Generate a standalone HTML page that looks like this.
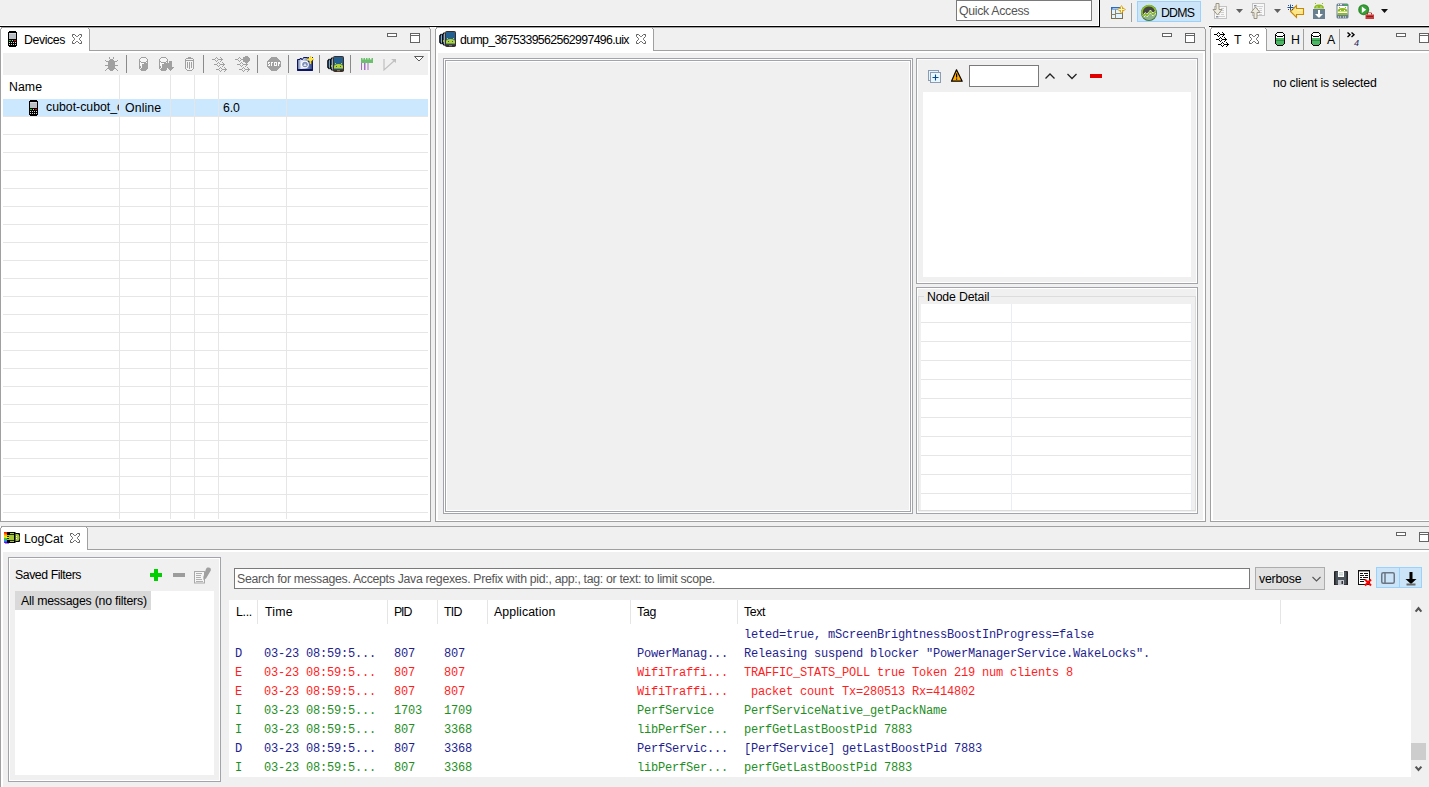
<!DOCTYPE html>
<html><head><meta charset="utf-8">
<style>
html,body{margin:0;padding:0}
body{width:1429px;height:787px;overflow:hidden;background:#f0f0f0;position:relative;font-family:"Liberation Sans",sans-serif;font-size:12px;color:#000}
.a{position:absolute}
.b{position:absolute;box-sizing:border-box}
.h{position:absolute;height:1px}
.v{position:absolute;width:1px}
.t{position:absolute;white-space:nowrap;line-height:14px;font-size:12px}
.m{position:absolute;white-space:pre;line-height:14px;font-family:"Liberation Mono",monospace;font-size:12px;letter-spacing:-0.2px;opacity:0.88}
svg{position:absolute;overflow:visible}
</style></head><body>

<div class="h" style="left:0px;top:25px;width:1099px;background:#fff"></div>
<div class="h" style="left:0px;top:26px;width:1100px;background:#000"></div>
<div class="v" style="left:1098px;top:0px;height:25px;background:#fff"></div>
<div class="v" style="left:1099px;top:0px;height:26px;background:#000"></div>
<div class="h" style="left:1209px;top:25px;width:220px;background:#fff"></div>
<div class="h" style="left:1209px;top:26px;width:220px;background:#000"></div>
<div class="b" style="left:956px;top:0px;width:136px;height:21px;border:1px solid #7a7a7a;background:#fff;"></div>
<div class="t" id="qa" style="left:959px;top:4px;color:#555;font-size:12.3px;letter-spacing:-0.301px;">Quick Access</div>
<!-- open perspective -->
<svg style="left:1111px;top:5px" width="15" height="14" viewBox="0 0 15 14"><rect x="0.5" y="2.5" width="11" height="11" fill="#e2f4ff" stroke="#7a6f4a" stroke-width="1"/><rect x="0" y="2" width="10" height="2.5" fill="#2e6bc0"/><rect x="1.5" y="3" width="7" height="1" fill="#9cc6f0"/><path d="M4.5 4.5V13.5M0.5 9.5H4.5M4.5 8.5H11.5" stroke="#8f8563" stroke-width="1"/><path d="M10.5 0L12.3 2.7L15 4.5L12.3 6.3L10.5 9L8.7 6.3L6 4.5L8.7 2.7Z" fill="#d9a520"/><path d="M10.5 1.5V7.5M7.5 4.5H13.5" stroke="#fff7c0" stroke-width="1"/></svg>
<div class="v" style="left:1131px;top:3px;height:19px;background:#a0a0a0"></div>
<!-- DDMS toggle -->
<div class="b" style="left:1137px;top:1px;width:64px;height:21px;border:1px solid #99d1ff;background:#cce4f7"></div>
<svg style="left:1141px;top:5px" width="16" height="16" viewBox="0 0 16 16"><defs><clipPath id="ddc"><circle cx="8" cy="8" r="7.2"/></clipPath></defs><circle cx="8" cy="8" r="8" fill="#3c6e2a"/><g clip-path="url(#ddc)"><rect x="0" y="0" width="16" height="16" fill="#90b48a"/><path d="M0 0H16V4.5L12 8L9.5 5L6 9L4.5 7.5L0 11.5Z" fill="#454545"/><path d="M0 11.5L4.5 7.5L6 9L9.5 5L12 8L16 4.5V7.5L12 11L9.5 8L6 12L4.5 10.5L0 14.5Z" fill="#86b82a"/><path d="M0 11.5L4.5 7.5L6 9L9.5 5L12 8L16 4.5" fill="none" stroke="#fff" stroke-width="1" stroke-dasharray="1.2 0.8"/><path d="M0 14.5L4.5 10.5L6 12L9.5 8L12 11L16 7.5" fill="none" stroke="#fff" stroke-width="1" stroke-dasharray="1.2 0.8"/></g><path d="M1.3 9.5A6.8 6.8 0 0 1 14.5 5.5" fill="none" stroke="#8cc21e" stroke-width="1.6"/></svg>
<!-- next annotation (disabled) -->
<svg style="left:1213px;top:3px" width="15" height="17" viewBox="0 0 15 17"><rect x="1.5" y="3.5" width="12" height="12" fill="#f8f8f8" stroke="#c3c3c3" stroke-width="1"/><g fill="#d0d0d0"><rect x="8" y="5" width="3" height="1"/><rect x="8" y="7" width="3" height="1"/><rect x="7" y="9" width="4" height="1"/><rect x="5" y="11" width="2" height="1"/><rect x="8" y="11" width="3" height="1"/><rect x="6" y="13" width="6" height="1"/></g><rect x="3" y="13" width="2.5" height="1.5" fill="#8a94a3"/><path d="M2.5 0.5H5.5V6.5H8.5L4 12L-0.5 6.5H2.5Z" transform="translate(0.5 0)" fill="#eeebe0" stroke="#9c9583" stroke-width="1"/></svg>
<svg style="left:1236px;top:9px" width="8" height="5" viewBox="0 0 8 5"><path d="M0 0H7L3.5 4Z" fill="#606060"/></svg>
<!-- prev annotation (disabled) -->
<svg style="left:1251px;top:3px" width="15" height="17" viewBox="0 0 15 17"><rect x="1.5" y="0.5" width="12" height="12" fill="#f8f8f8" stroke="#c3c3c3" stroke-width="1"/><g fill="#d0d0d0"><rect x="6" y="3" width="6" height="1"/><rect x="5" y="5" width="2" height="1"/><rect x="8" y="5" width="3" height="1"/><rect x="7" y="7" width="4" height="1"/><rect x="8" y="9" width="3" height="1"/><rect x="8" y="11" width="3" height="1"/></g><rect x="3" y="2" width="2.5" height="1.5" fill="#8a94a3"/><path d="M2.5 15.5H5.5V9.5H8.5L4 4L-0.5 9.5H2.5Z" transform="translate(0.5 0)" fill="#eeebe0" stroke="#9c9583" stroke-width="1"/></svg>
<svg style="left:1274px;top:9px" width="8" height="5" viewBox="0 0 8 5"><path d="M0 0H7L3.5 4Z" fill="#606060"/></svg>
<!-- back -->
<svg style="left:1287px;top:4px" width="18" height="14" viewBox="0 0 18 14"><path d="M3.5 7.5L9.5 1.5V4.5H16.5V10.5H9.5V13.5Z" fill="#fde58a" stroke="#c98a00" stroke-width="1.1"/><path d="M10 6H16" stroke="#fff8d0" stroke-width="1"/><g stroke="#1f4f8f" stroke-width="1"><path d="M3.5 0.5V6.5M0.5 3.5H6.5"/></g><g fill="#1f4f8f"><rect x="1" y="1" width="1" height="1"/><rect x="5" y="1" width="1" height="1"/><rect x="1" y="5" width="1" height="1"/><rect x="5" y="5" width="1" height="1"/></g></svg>
<!-- sdk manager -->
<svg style="left:1313px;top:3px" width="13" height="16" viewBox="0 0 13 16"><path d="M1 5.5Q1 1.5 6 1.5Q11 1.5 11 5.5Z" fill="#8dbb1a"/><rect x="2" y="0" width="1" height="1" fill="#8dbb1a"/><rect x="9" y="0" width="1" height="1" fill="#8dbb1a"/><rect x="3.5" y="3.5" width="1" height="1" fill="#fff"/><rect x="7.5" y="3.5" width="1" height="1" fill="#fff"/><rect x="0" y="6" width="12" height="10" fill="#687f90"/><path d="M5 7H7V11H10L6 15L2 11H5Z" fill="#fff"/></svg>
<!-- avd manager -->
<svg style="left:1336px;top:3px" width="13" height="16" viewBox="0 0 13 16"><rect x="0.5" y="0.5" width="12" height="15" rx="1.5" fill="#687f90"/><rect x="1.5" y="3" width="10" height="8.5" fill="#fff"/><path d="M1.5 8.5Q1.5 5 6.5 5Q11.5 5 11.5 8.5Z" fill="#8dbb1a"/><rect x="1.5" y="10" width="10" height="1.8" fill="#8dbb1a"/><rect x="3" y="4" width="1" height="1" fill="#8dbb1a"/><rect x="9" y="4" width="1" height="1" fill="#8dbb1a"/><rect x="4" y="7" width="1" height="1" fill="#fff"/><rect x="8" y="7" width="1" height="1" fill="#fff"/><g fill="#fff"><rect x="2" y="1.2" width="1" height="1"/><rect x="4" y="1.2" width="2" height="1"/><rect x="2" y="13.5" width="1" height="1"/><rect x="4" y="13.5" width="1" height="1"/><rect x="7" y="13.5" width="1" height="1"/><rect x="9" y="13.5" width="1" height="1"/></g><rect x="8.5" y="1.2" width="1.2" height="1.2" fill="#22dd22"/><rect x="10.3" y="1.2" width="1.2" height="1.2" fill="#22dd22"/></svg>
<!-- external tools -->
<svg style="left:1358px;top:4px" width="17" height="16" viewBox="0 0 17 16"><circle cx="5.7" cy="5.7" r="5.5" fill="#2e8b2e"/><circle cx="5.7" cy="5.7" r="4.2" fill="#37a137"/><path d="M3.8 2.5V9L8.2 5.7Z" fill="#fff"/><path d="M7.5 10.5H16V15H7.5Z" fill="#cc3b3b"/><path d="M9.5 10.5V9H13.5V10.5" fill="none" stroke="#b02828" stroke-width="1"/><rect x="10" y="9.3" width="3" height="0.8" fill="#fff"/><rect x="8.5" y="12" width="6.5" height="0.9" fill="#8a1a1a"/></svg>
<svg style="left:1381px;top:9px" width="8" height="5" viewBox="0 0 8 5"><path d="M0 0H7L3.5 4Z" fill="#111"/></svg>

<div class="t" id="ddms" style="left:1161px;top:6px;color:#000;font-size:12.3px;letter-spacing:-0.773px;">DDMS</div>
<div class="b" style="left:0px;top:27px;width:431px;height:495px;border:1px solid #a0a0a0;background:#fff;"></div>
<div class="b" style="left:435px;top:27px;width:771px;height:495px;border:1px solid #a0a0a0;background:#fff;"></div>
<div class="b" style="left:1210px;top:27px;width:240px;height:495px;border:1px solid #a0a0a0;background:#fff;"></div>
<div class="b" style="left:0px;top:526px;width:1450px;height:280px;border:1px solid #a0a0a0;background:#fff;"></div>
<div class="a" style="left:1px;top:28px;width:429px;height:22px;background:#f0f0f0"></div>
<div class="h" style="left:1px;top:50px;width:429px;background:#a0a0a0"></div>
<div class="a" style="left:1px;top:28px;width:88px;height:23px;background:#fff"></div>
<div class="v" style="left:89px;top:29px;height:22px;background:#a0a0a0"></div>
<div class="a" style="left:88px;top:28px;width:1px;height:1px;background:#a0a0a0"></div>
<div class="a" style="left:436px;top:28px;width:769px;height:22px;background:#f0f0f0"></div>
<div class="h" style="left:436px;top:50px;width:769px;background:#a0a0a0"></div>
<div class="a" style="left:436px;top:28px;width:217px;height:23px;background:#fff"></div>
<div class="v" style="left:653px;top:29px;height:22px;background:#a0a0a0"></div>
<div class="a" style="left:652px;top:28px;width:1px;height:1px;background:#a0a0a0"></div>
<div class="a" style="left:1211px;top:28px;width:218px;height:22px;background:#f0f0f0"></div>
<div class="h" style="left:1211px;top:50px;width:218px;background:#a0a0a0"></div>
<div class="a" style="left:1211px;top:28px;width:55px;height:23px;background:#fff"></div>
<div class="v" style="left:1266px;top:29px;height:22px;background:#a0a0a0"></div>
<div class="a" style="left:1265px;top:28px;width:1px;height:1px;background:#a0a0a0"></div>
<div class="v" style="left:1303px;top:29px;height:21px;background:#a0a0a0"></div>
<div class="v" style="left:1339px;top:29px;height:21px;background:#a0a0a0"></div>
<div class="a" style="left:1px;top:527px;width:1428px;height:22px;background:#f0f0f0"></div>
<div class="h" style="left:1px;top:549px;width:1428px;background:#a0a0a0"></div>
<div class="a" style="left:1px;top:527px;width:86px;height:23px;background:#fff"></div>
<div class="v" style="left:87px;top:528px;height:22px;background:#a0a0a0"></div>
<div class="a" style="left:86px;top:527px;width:1px;height:1px;background:#a0a0a0"></div>
<div class="a" style="left:0px;top:27px;width:1px;height:2px;background:#f0f0f0"></div>
<div class="a" style="left:0px;top:27px;width:1px;height:1px;background:#fff"></div>
<div class="a" style="left:1px;top:28px;width:1px;height:1px;background:#a0a0a0"></div>
<div class="a" style="left:430px;top:27px;width:1px;height:2px;background:#f0f0f0"></div>
<div class="a" style="left:430px;top:27px;width:1px;height:1px;background:#fff"></div>
<div class="a" style="left:429px;top:28px;width:1px;height:1px;background:#a0a0a0"></div>
<div class="a" style="left:435px;top:27px;width:1px;height:2px;background:#f0f0f0"></div>
<div class="a" style="left:435px;top:27px;width:1px;height:1px;background:#fff"></div>
<div class="a" style="left:436px;top:28px;width:1px;height:1px;background:#a0a0a0"></div>
<div class="a" style="left:1205px;top:27px;width:1px;height:2px;background:#f0f0f0"></div>
<div class="a" style="left:1205px;top:27px;width:1px;height:1px;background:#fff"></div>
<div class="a" style="left:1204px;top:28px;width:1px;height:1px;background:#a0a0a0"></div>
<div class="a" style="left:1210px;top:27px;width:1px;height:2px;background:#f0f0f0"></div>
<div class="a" style="left:1210px;top:27px;width:1px;height:1px;background:#fff"></div>
<div class="a" style="left:1211px;top:28px;width:1px;height:1px;background:#a0a0a0"></div>
<div class="a" style="left:0px;top:526px;width:1px;height:2px;background:#f0f0f0"></div>
<div class="a" style="left:0px;top:526px;width:1px;height:1px;background:#fff"></div>
<div class="a" style="left:1px;top:527px;width:1px;height:1px;background:#a0a0a0"></div>
<div class="b" style="left:387px;top:33px;width:10px;height:4px;border:1px solid #646464;background:#fff"></div>
<div class="b" style="left:410px;top:33px;width:10px;height:10px;border:1px solid #646464;background:#fff"></div>
<div class="h" style="left:410px;top:35px;width:10px;background:#646464"></div>
<div class="b" style="left:1162px;top:33px;width:10px;height:4px;border:1px solid #646464;background:#fff"></div>
<div class="b" style="left:1185px;top:33px;width:10px;height:10px;border:1px solid #646464;background:#fff"></div>
<div class="h" style="left:1185px;top:35px;width:10px;background:#646464"></div>
<div class="b" style="left:1396px;top:33px;width:10px;height:4px;border:1px solid #646464;background:#fff"></div>
<div class="b" style="left:1419px;top:33px;width:10px;height:10px;border:1px solid #646464;background:#fff"></div>
<div class="h" style="left:1419px;top:35px;width:10px;background:#646464"></div>
<div class="b" style="left:1396px;top:532px;width:10px;height:4px;border:1px solid #646464;background:#fff"></div>
<div class="b" style="left:1419px;top:532px;width:10px;height:10px;border:1px solid #646464;background:#fff"></div>
<div class="h" style="left:1419px;top:534px;width:10px;background:#646464"></div>
<div class="t" id="devtab" style="left:24px;top:33px;color:#000;font-size:12.3px;letter-spacing:-0.375px;">Devices</div>
<svg style="left:72px;top:34px" width="10" height="10" viewBox="0 0 10 10"><path d="M0.5 0.5H2.5L4.5 2.5H5.5L7.5 0.5H9.5V2.5L7.5 4.5V5.5L9.5 7.5V9.5H7.5L5.5 7.5H4.5L2.5 9.5H0.5V7.5L2.5 5.5V4.5L0.5 2.5Z" fill="#fff" stroke="#5f5f5f" stroke-width="1"/></svg>
<div class="t" id="dumptab" style="left:460px;top:33px;color:#000;font-size:12.3px;letter-spacing:-0.637px;">dump_3675339562562997496.uix</div>
<svg style="left:636px;top:34px" width="10" height="10" viewBox="0 0 10 10"><path d="M0.5 0.5H2.5L4.5 2.5H5.5L7.5 0.5H9.5V2.5L7.5 4.5V5.5L9.5 7.5V9.5H7.5L5.5 7.5H4.5L2.5 9.5H0.5V7.5L2.5 5.5V4.5L0.5 2.5Z" fill="#fff" stroke="#5f5f5f" stroke-width="1"/></svg>
<div class="t" id="ttab" style="left:1234px;top:33px;color:#000;font-size:12.3px;">T</div>
<svg style="left:1249px;top:34px" width="10" height="10" viewBox="0 0 10 10"><path d="M0.5 0.5H2.5L4.5 2.5H5.5L7.5 0.5H9.5V2.5L7.5 4.5V5.5L9.5 7.5V9.5H7.5L5.5 7.5H4.5L2.5 9.5H0.5V7.5L2.5 5.5V4.5L0.5 2.5Z" fill="#fff" stroke="#5f5f5f" stroke-width="1"/></svg>
<div class="t" id="htab" style="left:1291px;top:33px;color:#000;font-size:12.3px;">H</div>
<div class="t" id="atab" style="left:1327px;top:33px;color:#000;font-size:12.3px;">A</div>
<div class="t" id="lctab" style="left:24px;top:532px;color:#000;font-size:12.3px;letter-spacing:-0.111px;">LogCat</div>
<svg style="left:70px;top:533px" width="10" height="10" viewBox="0 0 10 10"><path d="M0.5 0.5H2.5L4.5 2.5H5.5L7.5 0.5H9.5V2.5L7.5 4.5V5.5L9.5 7.5V9.5H7.5L5.5 7.5H4.5L2.5 9.5H0.5V7.5L2.5 5.5V4.5L0.5 2.5Z" fill="#fff" stroke="#5f5f5f" stroke-width="1"/></svg>
<!-- phone devices tab -->
<svg style="left:8px;top:31px" width="9" height="16" viewBox="0 0 9 16"><path d="M1 0H8V1H9V15H8V16H1V15H0V1H1Z" fill="#000"/><rect x="1" y="2" width="7" height="6" fill="#b9bec4"/><rect x="1" y="2" width="7" height="1" fill="#d4d8dc"/><rect x="1" y="9" width="2" height="1" fill="#00e000"/><rect x="4" y="9" width="1" height="1" fill="#c8c8c8"/><rect x="6" y="9" width="2" height="1" fill="#f00000"/><g fill="#d8d8d8"><rect x="1" y="11" width="1" height="1"/><rect x="3" y="11" width="1" height="1"/><rect x="5" y="11" width="1" height="1"/><rect x="7" y="11" width="1" height="1"/><rect x="1" y="13" width="1" height="1"/><rect x="3" y="13" width="1" height="1"/><rect x="5" y="13" width="1" height="1"/><rect x="7" y="13" width="1" height="1"/></g></svg>
<!-- dump tab devices icon -->
<svg style="left:439px;top:31px" width="17" height="16" viewBox="0 0 17 16"><path d="M2.5 3L0.8 4.8V11.2L2.5 13" fill="#1f4f78" stroke="#000" stroke-width="1.1"/><path d="M5.5 1.5L3.6 3.4V12.6L5.5 14.5" fill="#2a6090" stroke="#000" stroke-width="1.1"/><rect x="4" y="9" width="1.2" height="2" fill="#9fbf30"/><rect x="6" y="0" width="11" height="16" rx="1.8" fill="#3b2e27"/><rect x="7" y="1" width="9" height="12.5" fill="#23608f"/><path d="M7 12.5V10.5Q7 8 11.5 8Q16 8 16 10.5V12.5Z" fill="#b4d335"/><rect x="8" y="7" width="1" height="1" fill="#b4d335"/><rect x="14" y="7" width="1" height="1" fill="#b4d335"/><rect x="9" y="10" width="1" height="1" fill="#23608f"/><rect x="13" y="10" width="1" height="1" fill="#23608f"/><rect x="10" y="14.3" width="3" height="0.9" fill="#a08c70"/></svg>
<!-- chevrons 4 -->
<svg style="left:1347px;top:32px" width="9" height="6" viewBox="0 0 9 6"><path d="M0.5 0.5L3 2.8L0.5 5M4.5 0.5L7 2.8L4.5 5" fill="none" stroke="#000" stroke-width="1.4"/></svg>
<div class="t" style="left:1354px;top:36px;font-size:9px;color:#1a1a5a;font-style:italic">4</div>
<!-- logcat icon -->
<svg style="left:2px;top:529px" width="20" height="18" viewBox="0 0 20 18"><defs><linearGradient id="rb" x1="0" y1="0" x2="0" y2="1"><stop offset="0" stop-color="#f00"/><stop offset="0.25" stop-color="#f90"/><stop offset="0.45" stop-color="#fe0"/><stop offset="0.62" stop-color="#2c2"/><stop offset="0.8" stop-color="#29f"/><stop offset="1" stop-color="#70f"/></linearGradient></defs>
<rect x="2" y="3" width="3" height="11" fill="url(#rb)"/><path d="M2 3H3L4 4.5H7L8 3H10V5H5V4Z" fill="#f00"/><rect x="3" y="13" width="4" height="1.5" fill="#60f"/>
<rect x="5" y="3" width="8.5" height="11" fill="#000"/><rect x="13" y="4" width="5" height="9" rx="1" fill="#000"/>
<rect x="8" y="4" width="4" height="1.2" fill="#a4c639"/><rect x="8" y="11.8" width="4" height="1.2" fill="#a4c639"/>
<rect x="5" y="6" width="7" height="1.2" fill="#a4c639"/><rect x="5" y="9.8" width="7" height="1.2" fill="#a4c639"/><rect x="7" y="6" width="5" height="5" fill="#a4c639"/><rect x="4" y="8" width="3" height="1" fill="#fe0"/>
<path d="M13.5 5H15.5Q17.5 5 17.5 8.5Q17.5 12 15.5 12H13.5Z" fill="#a4c639"/><rect x="14" y="7" width="1" height="1" fill="#fff"/><rect x="14" y="9" width="1" height="1" fill="#fff"/></svg>

<svg style="left:1211px;top:29px" width="19" height="18" viewBox="0 0 19 18" shape-rendering="crispEdges"><rect x="7" y="3" width="1" height="1" fill="#000"/><rect x="11" y="3" width="1" height="1" fill="#000"/><rect x="6" y="4" width="1" height="1" fill="#000"/><rect x="8" y="4" width="1" height="1" fill="#000"/><rect x="12" y="4" width="1" height="1" fill="#000"/><rect x="3" y="5" width="3" height="1" fill="#000"/><rect x="9" y="5" width="5" height="1" fill="#000"/><rect x="6" y="6" width="1" height="1" fill="#000"/><rect x="8" y="6" width="1" height="1" fill="#000"/><rect x="12" y="6" width="1" height="1" fill="#000"/><rect x="7" y="7" width="1" height="1" fill="#000"/><rect x="11" y="7" width="1" height="1" fill="#000"/><rect x="9" y="8" width="1" height="1" fill="#000"/><rect x="13" y="8" width="1" height="1" fill="#000"/><rect x="8" y="9" width="1" height="1" fill="#000"/><rect x="10" y="9" width="1" height="1" fill="#000"/><rect x="14" y="9" width="1" height="1" fill="#000"/><rect x="5" y="10" width="3" height="1" fill="#000"/><rect x="11" y="10" width="5" height="1" fill="#000"/><rect x="8" y="11" width="1" height="1" fill="#000"/><rect x="10" y="11" width="1" height="1" fill="#000"/><rect x="14" y="11" width="1" height="1" fill="#000"/><rect x="9" y="12" width="1" height="1" fill="#000"/><rect x="13" y="12" width="1" height="1" fill="#000"/><rect x="11" y="13" width="1" height="1" fill="#000"/><rect x="15" y="13" width="1" height="1" fill="#000"/><rect x="10" y="14" width="1" height="1" fill="#000"/><rect x="12" y="14" width="1" height="1" fill="#000"/><rect x="16" y="14" width="1" height="1" fill="#000"/><rect x="7" y="15" width="3" height="1" fill="#000"/><rect x="13" y="15" width="5" height="1" fill="#000"/><rect x="10" y="16" width="1" height="1" fill="#000"/><rect x="12" y="16" width="1" height="1" fill="#000"/><rect x="16" y="16" width="1" height="1" fill="#000"/><rect x="11" y="17" width="1" height="1" fill="#000"/><rect x="15" y="17" width="1" height="1" fill="#000"/></svg>
<svg style="left:1275px;top:32px" width="10" height="14" viewBox="0 0 10 14" shape-rendering="crispEdges"><rect x="2" y="0" width="6" height="1" fill="#000"/><rect x="1" y="1" width="1" height="1" fill="#000"/><rect x="2" y="1" width="6" height="1" fill="#fff"/><rect x="8" y="1" width="1" height="1" fill="#000"/><rect x="0" y="2" width="1" height="1" fill="#000"/><rect x="1" y="2" width="8" height="1" fill="#fff"/><rect x="9" y="2" width="1" height="1" fill="#000"/><rect x="0" y="3" width="2" height="1" fill="#000"/><rect x="2" y="3" width="6" height="1" fill="#fff"/><rect x="8" y="3" width="2" height="1" fill="#000"/><rect x="0" y="4" width="1" height="1" fill="#000"/><rect x="1" y="4" width="1" height="1" fill="#fff"/><rect x="2" y="4" width="6" height="1" fill="#000"/><rect x="8" y="4" width="1" height="1" fill="#fff"/><rect x="9" y="4" width="1" height="1" fill="#000"/><rect x="0" y="5" width="1" height="1" fill="#000"/><rect x="1" y="5" width="8" height="1" fill="#fff"/><rect x="9" y="5" width="1" height="1" fill="#000"/><rect x="0" y="6" width="1" height="1" fill="#000"/><rect x="1" y="6" width="8" height="1" fill="#4cb563"/><rect x="9" y="6" width="1" height="1" fill="#000"/><rect x="0" y="7" width="1" height="1" fill="#000"/><rect x="1" y="7" width="8" height="1" fill="#4cb563"/><rect x="9" y="7" width="1" height="1" fill="#000"/><rect x="0" y="8" width="1" height="1" fill="#000"/><rect x="1" y="8" width="8" height="1" fill="#2f8a45"/><rect x="9" y="8" width="1" height="1" fill="#000"/><rect x="0" y="9" width="1" height="1" fill="#000"/><rect x="1" y="9" width="8" height="1" fill="#4cb563"/><rect x="9" y="9" width="1" height="1" fill="#000"/><rect x="0" y="10" width="1" height="1" fill="#000"/><rect x="1" y="10" width="8" height="1" fill="#4cb563"/><rect x="9" y="10" width="1" height="1" fill="#000"/><rect x="0" y="11" width="1" height="1" fill="#000"/><rect x="1" y="11" width="8" height="1" fill="#4cb563"/><rect x="9" y="11" width="1" height="1" fill="#000"/><rect x="1" y="12" width="1" height="1" fill="#000"/><rect x="2" y="12" width="6" height="1" fill="#4cb563"/><rect x="8" y="12" width="1" height="1" fill="#000"/><rect x="2" y="13" width="6" height="1" fill="#000"/></svg>
<svg style="left:1311px;top:32px" width="10" height="14" viewBox="0 0 10 14" shape-rendering="crispEdges"><rect x="2" y="0" width="6" height="1" fill="#000"/><rect x="1" y="1" width="1" height="1" fill="#000"/><rect x="2" y="1" width="6" height="1" fill="#fff"/><rect x="8" y="1" width="1" height="1" fill="#000"/><rect x="0" y="2" width="1" height="1" fill="#000"/><rect x="1" y="2" width="8" height="1" fill="#fff"/><rect x="9" y="2" width="1" height="1" fill="#000"/><rect x="0" y="3" width="2" height="1" fill="#000"/><rect x="2" y="3" width="6" height="1" fill="#fff"/><rect x="8" y="3" width="2" height="1" fill="#000"/><rect x="0" y="4" width="1" height="1" fill="#000"/><rect x="1" y="4" width="1" height="1" fill="#fff"/><rect x="2" y="4" width="6" height="1" fill="#000"/><rect x="8" y="4" width="1" height="1" fill="#fff"/><rect x="9" y="4" width="1" height="1" fill="#000"/><rect x="0" y="5" width="1" height="1" fill="#000"/><rect x="1" y="5" width="8" height="1" fill="#fff"/><rect x="9" y="5" width="1" height="1" fill="#000"/><rect x="0" y="6" width="1" height="1" fill="#000"/><rect x="1" y="6" width="8" height="1" fill="#4cb563"/><rect x="9" y="6" width="1" height="1" fill="#000"/><rect x="0" y="7" width="1" height="1" fill="#000"/><rect x="1" y="7" width="8" height="1" fill="#4cb563"/><rect x="9" y="7" width="1" height="1" fill="#000"/><rect x="0" y="8" width="1" height="1" fill="#000"/><rect x="1" y="8" width="8" height="1" fill="#2f8a45"/><rect x="9" y="8" width="1" height="1" fill="#000"/><rect x="0" y="9" width="1" height="1" fill="#000"/><rect x="1" y="9" width="8" height="1" fill="#4cb563"/><rect x="9" y="9" width="1" height="1" fill="#000"/><rect x="0" y="10" width="1" height="1" fill="#000"/><rect x="1" y="10" width="8" height="1" fill="#4cb563"/><rect x="9" y="10" width="1" height="1" fill="#000"/><rect x="0" y="11" width="1" height="1" fill="#000"/><rect x="1" y="11" width="8" height="1" fill="#4cb563"/><rect x="9" y="11" width="1" height="1" fill="#000"/><rect x="1" y="12" width="1" height="1" fill="#000"/><rect x="2" y="12" width="6" height="1" fill="#4cb563"/><rect x="8" y="12" width="1" height="1" fill="#000"/><rect x="2" y="13" width="6" height="1" fill="#000"/></svg>
<div class="a" style="left:3px;top:53px;width:425px;height:22px;background:#f0f0f0"></div>
<div class="a" style="left:3px;top:75px;width:425px;height:444px;background:#fff"></div>
<div class="v" style="left:126px;top:55px;height:18px;background:#8a8a8a"></div>
<div class="v" style="left:203px;top:55px;height:18px;background:#8a8a8a"></div>
<div class="v" style="left:257px;top:55px;height:18px;background:#8a8a8a"></div>
<div class="v" style="left:288px;top:55px;height:18px;background:#8a8a8a"></div>
<!-- camera -->
<svg style="left:297px;top:56px" width="17" height="16" viewBox="0 0 17 16"><defs><linearGradient id="camg" x1="0" y1="0" x2="1" y2="0"><stop offset="0" stop-color="#5a6fa0"/><stop offset="0.25" stop-color="#e8eef8"/><stop offset="0.6" stop-color="#8ea3c8"/><stop offset="1" stop-color="#2a3f80"/></linearGradient></defs><path d="M0.5 3.5H3V2.5H4.5V3.5H5.5L6.5 1.5H10.5L11.5 3.5H15.5V14.5H0.5Z" fill="url(#camg)" stroke="#0d1460" stroke-width="1"/><rect x="0.5" y="13" width="15" height="2" fill="#0d1460"/><circle cx="8" cy="8.5" r="3.8" fill="#fff"/><circle cx="8" cy="8.5" r="2.8" fill="#7d8fb8"/><path d="M6.3 10L8 7L9.7 10Z" fill="#dfe7f5"/><path d="M13.5 0V8M10 3.5H17" stroke="#ffd400" stroke-width="1.3"/><circle cx="13.5" cy="3.5" r="1.8" fill="#ffe640"/><g fill="#1a2a70"><rect x="11" y="1" width="1" height="1"/><rect x="15" y="1" width="1" height="1"/><rect x="11" y="5" width="1" height="1"/><rect x="15" y="5" width="1" height="1"/></g></svg>
<div class="v" style="left:319px;top:55px;height:18px;background:#8a8a8a"></div>
<!-- devices -->
<svg style="left:327px;top:56px" width="17" height="16" viewBox="0 0 17 16"><path d="M2.5 3L0.8 4.8V11.2L2.5 13" fill="#1f4f78" stroke="#000" stroke-width="1.1"/><path d="M5.5 1.5L3.6 3.4V12.6L5.5 14.5" fill="#2a6090" stroke="#000" stroke-width="1.1"/><rect x="4" y="9" width="1.2" height="2" fill="#9fbf30"/><rect x="6" y="0" width="11" height="16" rx="1.8" fill="#3b2e27"/><rect x="7" y="1" width="9" height="12.5" fill="#23608f"/><path d="M7 12.5V10.5Q7 8 11.5 8Q16 8 16 10.5V12.5Z" fill="#b4d335"/><rect x="8" y="7" width="1" height="1" fill="#b4d335"/><rect x="14" y="7" width="1" height="1" fill="#b4d335"/><rect x="9" y="10" width="1" height="1" fill="#23608f"/><rect x="13" y="10" width="1" height="1" fill="#23608f"/><rect x="10" y="14.3" width="3" height="0.9" fill="#a08c70"/></svg>
<div class="v" style="left:350px;top:55px;height:18px;background:#8a8a8a"></div>
<!-- tracks -->
<svg style="left:361px;top:58px" width="13" height="12" viewBox="0 0 13 12"><path d="M0 0H1.5V1.5H2.5V0H4V1.5H5V0H6.5V1.5H7.5V0H9V1.5H10.5V0H12V5H0Z" fill="#6cbf6c"/><g fill="#a56cc1"><rect x="0" y="5" width="1" height="7"/><rect x="3" y="5" width="1.5" height="7"/><rect x="6.5" y="5" width="1" height="7"/></g></svg>
<!-- arrow -->
<svg style="left:383px;top:58px" width="14" height="13" viewBox="0 0 14 13"><path d="M1 1V12L11 3" fill="none" stroke="#c0c0c0" stroke-width="1.2"/><path d="M8 1H13V5Z" fill="#c0c0c0"/></svg>
<!-- view menu -->
<svg style="left:414px;top:56px" width="11" height="7" viewBox="0 0 11 7"><path d="M0.5 0.5H9.5L5 5Z" fill="#fff" stroke="#5a5a5a" stroke-width="1"/></svg>

<svg style="left:139px;top:57px" width="9" height="14" viewBox="0 0 9 14" shape-rendering="crispEdges"><rect x="2" y="0" width="5" height="1" fill="#a0a0a0"/><rect x="1" y="1" width="1" height="1" fill="#a0a0a0"/><rect x="2" y="1" width="5" height="1" fill="#f6f6f6"/><rect x="7" y="1" width="1" height="1" fill="#a0a0a0"/><rect x="0" y="2" width="1" height="1" fill="#a0a0a0"/><rect x="1" y="2" width="7" height="1" fill="#f6f6f6"/><rect x="8" y="2" width="1" height="1" fill="#a0a0a0"/><rect x="0" y="3" width="1" height="1" fill="#a0a0a0"/><rect x="1" y="3" width="7" height="1" fill="#f6f6f6"/><rect x="8" y="3" width="1" height="1" fill="#a0a0a0"/><rect x="0" y="4" width="2" height="1" fill="#a0a0a0"/><rect x="2" y="4" width="5" height="1" fill="#f6f6f6"/><rect x="7" y="4" width="2" height="1" fill="#a0a0a0"/><rect x="0" y="5" width="1" height="1" fill="#a0a0a0"/><rect x="1" y="5" width="1" height="1" fill="#f6f6f6"/><rect x="2" y="5" width="5" height="1" fill="#a0a0a0"/><rect x="7" y="5" width="1" height="1" fill="#f6f6f6"/><rect x="8" y="5" width="1" height="1" fill="#a0a0a0"/><rect x="0" y="6" width="1" height="1" fill="#a0a0a0"/><rect x="1" y="6" width="4" height="1" fill="#f6f6f6"/><rect x="5" y="6" width="4" height="1" fill="#a0a0a0"/><rect x="0" y="7" width="1" height="1" fill="#a0a0a0"/><rect x="1" y="7" width="2" height="1" fill="#f6f6f6"/><rect x="3" y="7" width="6" height="1" fill="#a0a0a0"/><rect x="0" y="8" width="1" height="1" fill="#a0a0a0"/><rect x="1" y="8" width="2" height="1" fill="#f6f6f6"/><rect x="3" y="8" width="6" height="1" fill="#a0a0a0"/><rect x="0" y="9" width="2" height="1" fill="#a0a0a0"/><rect x="2" y="9" width="1" height="1" fill="#f6f6f6"/><rect x="3" y="9" width="6" height="1" fill="#a0a0a0"/><rect x="0" y="10" width="2" height="1" fill="#a0a0a0"/><rect x="2" y="10" width="1" height="1" fill="#f6f6f6"/><rect x="3" y="10" width="6" height="1" fill="#a0a0a0"/><rect x="0" y="11" width="1" height="1" fill="#a0a0a0"/><rect x="1" y="11" width="1" height="1" fill="#f6f6f6"/><rect x="2" y="11" width="7" height="1" fill="#a0a0a0"/><rect x="1" y="12" width="7" height="1" fill="#a0a0a0"/><rect x="2" y="13" width="5" height="1" fill="#a0a0a0"/></svg>
<svg style="left:159px;top:57px" width="16" height="14" viewBox="0 0 16 14" shape-rendering="crispEdges"><rect x="2" y="0" width="5" height="1" fill="#a0a0a0"/><rect x="1" y="1" width="1" height="1" fill="#a0a0a0"/><rect x="2" y="1" width="5" height="1" fill="#f6f6f6"/><rect x="7" y="1" width="1" height="1" fill="#a0a0a0"/><rect x="0" y="2" width="1" height="1" fill="#a0a0a0"/><rect x="1" y="2" width="7" height="1" fill="#f6f6f6"/><rect x="8" y="2" width="1" height="1" fill="#a0a0a0"/><rect x="0" y="3" width="1" height="1" fill="#a0a0a0"/><rect x="1" y="3" width="7" height="1" fill="#f6f6f6"/><rect x="8" y="3" width="1" height="1" fill="#a0a0a0"/><rect x="0" y="4" width="2" height="1" fill="#a0a0a0"/><rect x="2" y="4" width="5" height="1" fill="#f6f6f6"/><rect x="7" y="4" width="2" height="1" fill="#a0a0a0"/><rect x="10" y="4" width="3" height="1" fill="#a0a0a0"/><rect x="0" y="5" width="1" height="1" fill="#a0a0a0"/><rect x="1" y="5" width="1" height="1" fill="#f6f6f6"/><rect x="2" y="5" width="5" height="1" fill="#a0a0a0"/><rect x="7" y="5" width="1" height="1" fill="#f6f6f6"/><rect x="8" y="5" width="1" height="1" fill="#a0a0a0"/><rect x="10" y="5" width="3" height="1" fill="#a0a0a0"/><rect x="0" y="6" width="1" height="1" fill="#a0a0a0"/><rect x="1" y="6" width="4" height="1" fill="#f6f6f6"/><rect x="5" y="6" width="8" height="1" fill="#a0a0a0"/><rect x="0" y="7" width="1" height="1" fill="#a0a0a0"/><rect x="1" y="7" width="2" height="1" fill="#f6f6f6"/><rect x="3" y="7" width="10" height="1" fill="#a0a0a0"/><rect x="0" y="8" width="1" height="1" fill="#a0a0a0"/><rect x="1" y="8" width="2" height="1" fill="#f6f6f6"/><rect x="3" y="8" width="10" height="1" fill="#a0a0a0"/><rect x="0" y="9" width="2" height="1" fill="#a0a0a0"/><rect x="2" y="9" width="1" height="1" fill="#f6f6f6"/><rect x="3" y="9" width="10" height="1" fill="#a0a0a0"/><rect x="0" y="10" width="2" height="1" fill="#a0a0a0"/><rect x="2" y="10" width="1" height="1" fill="#f6f6f6"/><rect x="3" y="10" width="12" height="1" fill="#a0a0a0"/><rect x="0" y="11" width="1" height="1" fill="#a0a0a0"/><rect x="1" y="11" width="1" height="1" fill="#f6f6f6"/><rect x="2" y="11" width="6" height="1" fill="#a0a0a0"/><rect x="8" y="11" width="1" height="1" fill="#f6f6f6"/><rect x="9" y="11" width="5" height="1" fill="#a0a0a0"/><rect x="1" y="12" width="7" height="1" fill="#a0a0a0"/><rect x="10" y="12" width="3" height="1" fill="#a0a0a0"/><rect x="2" y="13" width="5" height="1" fill="#a0a0a0"/><rect x="11" y="13" width="1" height="1" fill="#a0a0a0"/></svg>
<svg style="left:185px;top:57px" width="9" height="14" viewBox="0 0 9 14" shape-rendering="crispEdges"><rect x="3" y="0" width="3" height="1" fill="#a0a0a0"/><rect x="1" y="1" width="7" height="1" fill="#a0a0a0"/><rect x="0" y="2" width="1" height="1" fill="#a0a0a0"/><rect x="1" y="2" width="7" height="1" fill="#f4f4f4"/><rect x="8" y="2" width="1" height="1" fill="#a0a0a0"/><rect x="0" y="3" width="9" height="1" fill="#a0a0a0"/><rect x="0" y="4" width="1" height="1" fill="#a0a0a0"/><rect x="1" y="4" width="7" height="1" fill="#f4f4f4"/><rect x="8" y="4" width="1" height="1" fill="#a0a0a0"/><rect x="0" y="5" width="1" height="1" fill="#a0a0a0"/><rect x="1" y="5" width="1" height="1" fill="#f4f4f4"/><rect x="2" y="5" width="1" height="1" fill="#a0a0a0"/><rect x="3" y="5" width="1" height="1" fill="#f4f4f4"/><rect x="4" y="5" width="1" height="1" fill="#a0a0a0"/><rect x="5" y="5" width="1" height="1" fill="#f4f4f4"/><rect x="6" y="5" width="1" height="1" fill="#a0a0a0"/><rect x="7" y="5" width="1" height="1" fill="#f4f4f4"/><rect x="8" y="5" width="1" height="1" fill="#a0a0a0"/><rect x="0" y="6" width="1" height="1" fill="#a0a0a0"/><rect x="1" y="6" width="1" height="1" fill="#f4f4f4"/><rect x="2" y="6" width="1" height="1" fill="#a0a0a0"/><rect x="3" y="6" width="1" height="1" fill="#f4f4f4"/><rect x="4" y="6" width="1" height="1" fill="#a0a0a0"/><rect x="5" y="6" width="1" height="1" fill="#f4f4f4"/><rect x="6" y="6" width="1" height="1" fill="#a0a0a0"/><rect x="7" y="6" width="1" height="1" fill="#f4f4f4"/><rect x="8" y="6" width="1" height="1" fill="#a0a0a0"/><rect x="0" y="7" width="1" height="1" fill="#a0a0a0"/><rect x="1" y="7" width="1" height="1" fill="#f4f4f4"/><rect x="2" y="7" width="1" height="1" fill="#a0a0a0"/><rect x="3" y="7" width="1" height="1" fill="#f4f4f4"/><rect x="4" y="7" width="1" height="1" fill="#a0a0a0"/><rect x="5" y="7" width="1" height="1" fill="#f4f4f4"/><rect x="6" y="7" width="1" height="1" fill="#a0a0a0"/><rect x="7" y="7" width="1" height="1" fill="#f4f4f4"/><rect x="8" y="7" width="1" height="1" fill="#a0a0a0"/><rect x="0" y="8" width="1" height="1" fill="#a0a0a0"/><rect x="1" y="8" width="1" height="1" fill="#f4f4f4"/><rect x="2" y="8" width="1" height="1" fill="#a0a0a0"/><rect x="3" y="8" width="1" height="1" fill="#f4f4f4"/><rect x="4" y="8" width="1" height="1" fill="#a0a0a0"/><rect x="5" y="8" width="1" height="1" fill="#f4f4f4"/><rect x="6" y="8" width="1" height="1" fill="#a0a0a0"/><rect x="7" y="8" width="1" height="1" fill="#f4f4f4"/><rect x="8" y="8" width="1" height="1" fill="#a0a0a0"/><rect x="0" y="9" width="1" height="1" fill="#a0a0a0"/><rect x="1" y="9" width="1" height="1" fill="#f4f4f4"/><rect x="2" y="9" width="1" height="1" fill="#a0a0a0"/><rect x="3" y="9" width="1" height="1" fill="#f4f4f4"/><rect x="4" y="9" width="1" height="1" fill="#a0a0a0"/><rect x="5" y="9" width="1" height="1" fill="#f4f4f4"/><rect x="6" y="9" width="1" height="1" fill="#a0a0a0"/><rect x="7" y="9" width="1" height="1" fill="#f4f4f4"/><rect x="8" y="9" width="1" height="1" fill="#a0a0a0"/><rect x="0" y="10" width="1" height="1" fill="#a0a0a0"/><rect x="1" y="10" width="1" height="1" fill="#f4f4f4"/><rect x="2" y="10" width="1" height="1" fill="#a0a0a0"/><rect x="3" y="10" width="1" height="1" fill="#f4f4f4"/><rect x="4" y="10" width="1" height="1" fill="#a0a0a0"/><rect x="5" y="10" width="1" height="1" fill="#f4f4f4"/><rect x="6" y="10" width="1" height="1" fill="#a0a0a0"/><rect x="7" y="10" width="1" height="1" fill="#f4f4f4"/><rect x="8" y="10" width="1" height="1" fill="#a0a0a0"/><rect x="0" y="11" width="1" height="1" fill="#a0a0a0"/><rect x="1" y="11" width="3" height="1" fill="#f4f4f4"/><rect x="4" y="11" width="1" height="1" fill="#a0a0a0"/><rect x="5" y="11" width="3" height="1" fill="#f4f4f4"/><rect x="8" y="11" width="1" height="1" fill="#a0a0a0"/><rect x="1" y="12" width="1" height="1" fill="#a0a0a0"/><rect x="2" y="12" width="5" height="1" fill="#f4f4f4"/><rect x="7" y="12" width="1" height="1" fill="#a0a0a0"/><rect x="2" y="13" width="5" height="1" fill="#a0a0a0"/></svg>
<svg style="left:104px;top:57px" width="15" height="14" viewBox="0 0 15 14" shape-rendering="crispEdges"><rect x="5" y="0" width="1" height="1" fill="#a0a0a0"/><rect x="9" y="0" width="1" height="1" fill="#a0a0a0"/><rect x="5" y="1" width="1" height="1" fill="#a0a0a0"/><rect x="9" y="1" width="1" height="1" fill="#a0a0a0"/><rect x="6" y="2" width="3" height="1" fill="#a0a0a0"/><rect x="1" y="3" width="1" height="1" fill="#a0a0a0"/><rect x="5" y="3" width="5" height="1" fill="#a0a0a0"/><rect x="13" y="3" width="1" height="1" fill="#a0a0a0"/><rect x="2" y="4" width="11" height="1" fill="#a0a0a0"/><rect x="4" y="5" width="7" height="1" fill="#a0a0a0"/><rect x="4" y="6" width="7" height="1" fill="#a0a0a0"/><rect x="4" y="7" width="7" height="1" fill="#a0a0a0"/><rect x="1" y="8" width="13" height="1" fill="#a0a0a0"/><rect x="4" y="9" width="7" height="1" fill="#a0a0a0"/><rect x="4" y="10" width="7" height="1" fill="#a0a0a0"/><rect x="3" y="11" width="9" height="1" fill="#a0a0a0"/><rect x="2" y="12" width="1" height="1" fill="#a0a0a0"/><rect x="5" y="12" width="5" height="1" fill="#a0a0a0"/><rect x="12" y="12" width="1" height="1" fill="#a0a0a0"/><rect x="1" y="13" width="1" height="1" fill="#a0a0a0"/><rect x="6" y="13" width="3" height="1" fill="#a0a0a0"/><rect x="13" y="13" width="1" height="1" fill="#a0a0a0"/></svg>
<svg style="left:210px;top:55px" width="17" height="17" viewBox="0 0 17 17" shape-rendering="crispEdges"><rect x="6" y="2" width="1" height="1" fill="#a0a0a0"/><rect x="10" y="2" width="1" height="1" fill="#a0a0a0"/><rect x="5" y="3" width="1" height="1" fill="#a0a0a0"/><rect x="7" y="3" width="1" height="1" fill="#a0a0a0"/><rect x="11" y="3" width="1" height="1" fill="#a0a0a0"/><rect x="2" y="4" width="3" height="1" fill="#a0a0a0"/><rect x="8" y="4" width="5" height="1" fill="#a0a0a0"/><rect x="5" y="5" width="1" height="1" fill="#a0a0a0"/><rect x="7" y="5" width="1" height="1" fill="#a0a0a0"/><rect x="11" y="5" width="1" height="1" fill="#a0a0a0"/><rect x="6" y="6" width="1" height="1" fill="#a0a0a0"/><rect x="10" y="6" width="1" height="1" fill="#a0a0a0"/><rect x="8" y="7" width="1" height="1" fill="#a0a0a0"/><rect x="12" y="7" width="1" height="1" fill="#a0a0a0"/><rect x="7" y="8" width="1" height="1" fill="#a0a0a0"/><rect x="9" y="8" width="1" height="1" fill="#a0a0a0"/><rect x="13" y="8" width="1" height="1" fill="#a0a0a0"/><rect x="4" y="9" width="3" height="1" fill="#a0a0a0"/><rect x="10" y="9" width="5" height="1" fill="#a0a0a0"/><rect x="7" y="10" width="1" height="1" fill="#a0a0a0"/><rect x="9" y="10" width="1" height="1" fill="#a0a0a0"/><rect x="13" y="10" width="1" height="1" fill="#a0a0a0"/><rect x="8" y="11" width="1" height="1" fill="#a0a0a0"/><rect x="12" y="11" width="1" height="1" fill="#a0a0a0"/><rect x="10" y="12" width="1" height="1" fill="#a0a0a0"/><rect x="14" y="12" width="1" height="1" fill="#a0a0a0"/><rect x="9" y="13" width="1" height="1" fill="#a0a0a0"/><rect x="11" y="13" width="1" height="1" fill="#a0a0a0"/><rect x="15" y="13" width="1" height="1" fill="#a0a0a0"/><rect x="6" y="14" width="3" height="1" fill="#a0a0a0"/><rect x="12" y="14" width="5" height="1" fill="#a0a0a0"/><rect x="9" y="15" width="1" height="1" fill="#a0a0a0"/><rect x="11" y="15" width="1" height="1" fill="#a0a0a0"/><rect x="15" y="15" width="1" height="1" fill="#a0a0a0"/><rect x="10" y="16" width="1" height="1" fill="#a0a0a0"/><rect x="14" y="16" width="1" height="1" fill="#a0a0a0"/></svg>
<svg style="left:233px;top:53px" width="18" height="19" viewBox="0 0 18 19" shape-rendering="crispEdges"><rect x="12" y="3" width="3" height="1" fill="#a0a0a0"/><rect x="6" y="4" width="1" height="1" fill="#a0a0a0"/><rect x="10" y="4" width="6" height="1" fill="#a0a0a0"/><rect x="5" y="5" width="1" height="1" fill="#a0a0a0"/><rect x="7" y="5" width="1" height="1" fill="#a0a0a0"/><rect x="10" y="5" width="7" height="1" fill="#a0a0a0"/><rect x="2" y="6" width="3" height="1" fill="#a0a0a0"/><rect x="8" y="6" width="9" height="1" fill="#a0a0a0"/><rect x="5" y="7" width="1" height="1" fill="#a0a0a0"/><rect x="7" y="7" width="1" height="1" fill="#a0a0a0"/><rect x="10" y="7" width="7" height="1" fill="#a0a0a0"/><rect x="6" y="8" width="1" height="1" fill="#a0a0a0"/><rect x="10" y="8" width="6" height="1" fill="#a0a0a0"/><rect x="8" y="9" width="1" height="1" fill="#a0a0a0"/><rect x="12" y="9" width="3" height="1" fill="#a0a0a0"/><rect x="7" y="10" width="1" height="1" fill="#a0a0a0"/><rect x="9" y="10" width="1" height="1" fill="#a0a0a0"/><rect x="13" y="10" width="1" height="1" fill="#a0a0a0"/><rect x="4" y="11" width="3" height="1" fill="#a0a0a0"/><rect x="10" y="11" width="5" height="1" fill="#a0a0a0"/><rect x="7" y="12" width="1" height="1" fill="#a0a0a0"/><rect x="9" y="12" width="1" height="1" fill="#a0a0a0"/><rect x="13" y="12" width="1" height="1" fill="#a0a0a0"/><rect x="8" y="13" width="1" height="1" fill="#a0a0a0"/><rect x="12" y="13" width="1" height="1" fill="#a0a0a0"/><rect x="10" y="14" width="1" height="1" fill="#a0a0a0"/><rect x="14" y="14" width="1" height="1" fill="#a0a0a0"/><rect x="9" y="15" width="1" height="1" fill="#a0a0a0"/><rect x="11" y="15" width="1" height="1" fill="#a0a0a0"/><rect x="15" y="15" width="1" height="1" fill="#a0a0a0"/><rect x="6" y="16" width="3" height="1" fill="#a0a0a0"/><rect x="12" y="16" width="5" height="1" fill="#a0a0a0"/><rect x="9" y="17" width="1" height="1" fill="#a0a0a0"/><rect x="11" y="17" width="1" height="1" fill="#a0a0a0"/><rect x="15" y="17" width="1" height="1" fill="#a0a0a0"/><rect x="10" y="18" width="1" height="1" fill="#a0a0a0"/><rect x="14" y="18" width="1" height="1" fill="#a0a0a0"/></svg>
<svg style="left:267px;top:57px" width="14" height="14" viewBox="0 0 14 14" shape-rendering="crispEdges"><rect x="4" y="0" width="6" height="1" fill="#a0a0a0"/><rect x="3" y="1" width="8" height="1" fill="#a0a0a0"/><rect x="2" y="2" width="10" height="1" fill="#a0a0a0"/><rect x="1" y="3" width="12" height="1" fill="#a0a0a0"/><rect x="0" y="4" width="14" height="1" fill="#a0a0a0"/><rect x="0" y="5" width="1" height="1" fill="#a0a0a0"/><rect x="1" y="5" width="2" height="1" fill="#fafafa"/><rect x="3" y="5" width="1" height="1" fill="#a0a0a0"/><rect x="4" y="5" width="2" height="1" fill="#fafafa"/><rect x="6" y="5" width="1" height="1" fill="#a0a0a0"/><rect x="7" y="5" width="3" height="1" fill="#fafafa"/><rect x="10" y="5" width="1" height="1" fill="#a0a0a0"/><rect x="11" y="5" width="2" height="1" fill="#fafafa"/><rect x="13" y="5" width="1" height="1" fill="#a0a0a0"/><rect x="0" y="6" width="1" height="1" fill="#a0a0a0"/><rect x="1" y="6" width="1" height="1" fill="#fafafa"/><rect x="2" y="6" width="2" height="1" fill="#a0a0a0"/><rect x="4" y="6" width="1" height="1" fill="#fafafa"/><rect x="5" y="6" width="2" height="1" fill="#a0a0a0"/><rect x="7" y="6" width="1" height="1" fill="#fafafa"/><rect x="8" y="6" width="1" height="1" fill="#a0a0a0"/><rect x="9" y="6" width="1" height="1" fill="#fafafa"/><rect x="10" y="6" width="1" height="1" fill="#a0a0a0"/><rect x="11" y="6" width="2" height="1" fill="#fafafa"/><rect x="13" y="6" width="1" height="1" fill="#a0a0a0"/><rect x="0" y="7" width="2" height="1" fill="#a0a0a0"/><rect x="2" y="7" width="1" height="1" fill="#fafafa"/><rect x="3" y="7" width="1" height="1" fill="#a0a0a0"/><rect x="4" y="7" width="1" height="1" fill="#fafafa"/><rect x="5" y="7" width="2" height="1" fill="#a0a0a0"/><rect x="7" y="7" width="1" height="1" fill="#fafafa"/><rect x="8" y="7" width="1" height="1" fill="#a0a0a0"/><rect x="9" y="7" width="1" height="1" fill="#fafafa"/><rect x="10" y="7" width="1" height="1" fill="#a0a0a0"/><rect x="11" y="7" width="1" height="1" fill="#fafafa"/><rect x="12" y="7" width="2" height="1" fill="#a0a0a0"/><rect x="0" y="8" width="1" height="1" fill="#a0a0a0"/><rect x="1" y="8" width="2" height="1" fill="#fafafa"/><rect x="3" y="8" width="1" height="1" fill="#a0a0a0"/><rect x="4" y="8" width="1" height="1" fill="#fafafa"/><rect x="5" y="8" width="2" height="1" fill="#a0a0a0"/><rect x="7" y="8" width="3" height="1" fill="#fafafa"/><rect x="10" y="8" width="1" height="1" fill="#a0a0a0"/><rect x="11" y="8" width="1" height="1" fill="#fafafa"/><rect x="12" y="8" width="2" height="1" fill="#a0a0a0"/><rect x="0" y="9" width="14" height="1" fill="#a0a0a0"/><rect x="1" y="10" width="12" height="1" fill="#a0a0a0"/><rect x="2" y="11" width="10" height="1" fill="#a0a0a0"/><rect x="3" y="12" width="8" height="1" fill="#a0a0a0"/><rect x="4" y="13" width="6" height="1" fill="#a0a0a0"/></svg>
<div class="a" style="left:3px;top:99px;width:425px;height:17px;background:#cce8ff"></div>
<div class="h" style="left:3px;top:116px;width:425px;background:#e6e6e6"></div>
<div class="h" style="left:3px;top:134px;width:425px;background:#e6e6e6"></div>
<div class="h" style="left:3px;top:152px;width:425px;background:#e6e6e6"></div>
<div class="h" style="left:3px;top:170px;width:425px;background:#e6e6e6"></div>
<div class="h" style="left:3px;top:188px;width:425px;background:#e6e6e6"></div>
<div class="h" style="left:3px;top:206px;width:425px;background:#e6e6e6"></div>
<div class="h" style="left:3px;top:224px;width:425px;background:#e6e6e6"></div>
<div class="h" style="left:3px;top:242px;width:425px;background:#e6e6e6"></div>
<div class="h" style="left:3px;top:260px;width:425px;background:#e6e6e6"></div>
<div class="h" style="left:3px;top:278px;width:425px;background:#e6e6e6"></div>
<div class="h" style="left:3px;top:296px;width:425px;background:#e6e6e6"></div>
<div class="h" style="left:3px;top:314px;width:425px;background:#e6e6e6"></div>
<div class="h" style="left:3px;top:332px;width:425px;background:#e6e6e6"></div>
<div class="h" style="left:3px;top:350px;width:425px;background:#e6e6e6"></div>
<div class="h" style="left:3px;top:368px;width:425px;background:#e6e6e6"></div>
<div class="h" style="left:3px;top:386px;width:425px;background:#e6e6e6"></div>
<div class="h" style="left:3px;top:404px;width:425px;background:#e6e6e6"></div>
<div class="h" style="left:3px;top:422px;width:425px;background:#e6e6e6"></div>
<div class="h" style="left:3px;top:440px;width:425px;background:#e6e6e6"></div>
<div class="h" style="left:3px;top:458px;width:425px;background:#e6e6e6"></div>
<div class="h" style="left:3px;top:476px;width:425px;background:#e6e6e6"></div>
<div class="h" style="left:3px;top:494px;width:425px;background:#e6e6e6"></div>
<div class="h" style="left:3px;top:512px;width:425px;background:#e6e6e6"></div>
<div class="v" style="left:119px;top:75px;height:444px;background:#e6e6e6"></div>
<div class="v" style="left:170px;top:75px;height:444px;background:#e6e6e6"></div>
<div class="v" style="left:194px;top:75px;height:444px;background:#e6e6e6"></div>
<div class="v" style="left:218px;top:75px;height:444px;background:#e6e6e6"></div>
<div class="v" style="left:286px;top:75px;height:444px;background:#e6e6e6"></div>
<div class="t" id="name" style="left:9px;top:80px;color:#000;font-size:12.3px;letter-spacing:0.062px;">Name</div>
<div class="a" style="left:46px;top:99px;width:73px;height:17px;overflow:hidden">
<div class="t" id="cubot" style="left:0px;top:1px;color:#000;font-size:12.3px;">cubot-cubot_cubot</div>
</div>
<div class="t" id="online" style="left:125px;top:101px;color:#000;font-size:12.3px;letter-spacing:0.111px;">Online</div>
<div class="t" id="six" style="left:223px;top:101px;color:#000;font-size:12.3px;letter-spacing:-0.155px;">6.0</div>
<svg style="left:29px;top:100px" width="9" height="16" viewBox="0 0 9 16"><path d="M1 0H8V1H9V15H8V16H1V15H0V1H1Z" fill="#000"/><rect x="1" y="2" width="7" height="6" fill="#b9bec4"/><rect x="1" y="2" width="7" height="1" fill="#d4d8dc"/><rect x="1" y="9" width="2" height="1" fill="#00e000"/><rect x="4" y="9" width="1" height="1" fill="#c8c8c8"/><rect x="6" y="9" width="2" height="1" fill="#f00000"/><g fill="#d8d8d8"><rect x="1" y="11" width="1" height="1"/><rect x="3" y="11" width="1" height="1"/><rect x="5" y="11" width="1" height="1"/><rect x="7" y="11" width="1" height="1"/><rect x="1" y="13" width="1" height="1"/><rect x="3" y="13" width="1" height="1"/><rect x="5" y="13" width="1" height="1"/><rect x="7" y="13" width="1" height="1"/></g></svg>
<div class="a" style="left:438px;top:53px;width:765px;height:467px;background:#f0f0f0"></div>
<div class="b" style="left:443px;top:58px;width:470px;height:456px;border:1px solid #a3a3aa;background:transparent;"></div>
<div class="b" style="left:444px;top:59px;width:468px;height:454px;border:1px solid #fff;background:transparent;"></div>
<div class="b" style="left:445px;top:60px;width:466px;height:452px;border:1px solid #a3a3aa;background:transparent;"></div>
<div class="b" style="left:446px;top:61px;width:464px;height:450px;border:1px solid #fff;background:transparent;"></div>
<div class="b" style="left:916px;top:58px;width:282px;height:226px;border:1px solid #a3a3aa;background:transparent;"></div>
<div class="b" style="left:917px;top:59px;width:280px;height:224px;border:1px solid #fff;background:transparent;"></div>
<div class="b" style="left:969px;top:65px;width:70px;height:22px;border:1px solid #7a7a7a;background:#fff;"></div>
<div class="a" style="left:923px;top:92px;width:268px;height:185px;background:#fff"></div>
<div class="b" style="left:916px;top:287px;width:282px;height:227px;border:1px solid #a3a3aa;background:transparent;"></div>
<div class="b" style="left:917px;top:288px;width:280px;height:225px;border:1px solid #fff;background:transparent;"></div>
<div class="b" style="left:918px;top:296px;width:278px;height:215px;border:1px solid #dcdcdc;background:transparent;"></div>
<div class="a" style="left:924px;top:290px;width:67px;height:12px;background:#f0f0f0"></div>
<div class="t" id="nd" style="left:927px;top:290px;color:#000;font-size:12.3px;letter-spacing:-0.177px;">Node Detail</div>
<div class="a" style="left:921px;top:304px;width:270px;height:206px;background:#fff"></div>
<div class="h" style="left:921px;top:322px;width:270px;background:#e6e6e6"></div>
<div class="h" style="left:921px;top:341px;width:270px;background:#e6e6e6"></div>
<div class="h" style="left:921px;top:360px;width:270px;background:#e6e6e6"></div>
<div class="h" style="left:921px;top:379px;width:270px;background:#e6e6e6"></div>
<div class="h" style="left:921px;top:398px;width:270px;background:#e6e6e6"></div>
<div class="h" style="left:921px;top:417px;width:270px;background:#e6e6e6"></div>
<div class="h" style="left:921px;top:436px;width:270px;background:#e6e6e6"></div>
<div class="h" style="left:921px;top:455px;width:270px;background:#e6e6e6"></div>
<div class="h" style="left:921px;top:474px;width:270px;background:#e6e6e6"></div>
<div class="h" style="left:921px;top:493px;width:270px;background:#e6e6e6"></div>
<div class="v" style="left:1011px;top:304px;height:206px;background:#e8eef5"></div>
<div class="v" style="left:1191px;top:304px;height:206px;background:#e8eef5"></div>
<svg style="left:928px;top:70px" width="13" height="13" viewBox="0 0 13 13"><rect x="0.5" y="0.5" width="10" height="10" fill="#e2f6ff" stroke="#8f9bb0" stroke-width="1"/><rect x="2.5" y="2.5" width="10" height="10" fill="#e8f8ff" stroke="#8f9bb0" stroke-width="1"/><path d="M7.5 4.5V10.5M4.5 7.5H10.5" stroke="#0a4a8a" stroke-width="1.1"/></svg>
<svg style="left:951px;top:69px" width="12" height="13" viewBox="0 0 12 13"><path d="M5.5 0.8L11.2 12.2H0.5Z" fill="#ffa800" stroke="#000" stroke-width="1.2" stroke-linejoin="round"/><rect x="5" y="4.5" width="1.2" height="4" fill="#000"/><rect x="5" y="9.5" width="1.2" height="1.2" fill="#000"/></svg>
<svg style="left:1045px;top:73px" width="11" height="7" viewBox="0 0 11 7"><path d="M0.5 5.5L5 1L9.5 5.5" fill="none" stroke="#222" stroke-width="1.3"/></svg>
<svg style="left:1067px;top:73px" width="11" height="7" viewBox="0 0 11 7"><path d="M0.5 1L5 5.5L9.5 1" fill="none" stroke="#222" stroke-width="1.3"/></svg>
<div class="a" style="left:1090px;top:74px;width:12px;height:4px;background:#e00000"></div>

<div class="a" style="left:1213px;top:53px;width:216px;height:467px;background:#f0f0f0"></div>
<div class="t" id="ncs" style="left:1273px;top:76px;color:#000;font-size:12.3px;letter-spacing:-0.176px;">no client is selected</div>
<div class="a" style="left:3px;top:552px;width:1426px;height:235px;background:#f0f0f0"></div>
<div class="b" style="left:8px;top:557px;width:213px;height:225px;border:1px solid #a3a3aa;background:transparent;"></div>
<div class="b" style="left:9px;top:558px;width:211px;height:223px;border:1px solid #fff;background:transparent;"></div>
<div class="t" id="sf" style="left:15px;top:568px;color:#000;font-size:12.3px;letter-spacing:-0.439px;">Saved Filters</div>
<div class="a" style="left:15px;top:591px;width:199px;height:184px;background:#fff"></div>
<div class="a" style="left:15px;top:591px;width:136px;height:19px;background:#d9d9d9"></div>
<div class="t" id="allm" style="left:21px;top:594px;color:#000;font-size:12.3px;letter-spacing:-0.217px;">All messages (no filters)</div>
<div class="b" style="left:234px;top:568px;width:1016px;height:21px;border:1px solid #7a7a7a;background:#fff;"></div>
<div class="t" id="srch" style="left:237px;top:572px;color:#555;font-size:12.3px;letter-spacing:-0.305px;">Search for messages. Accepts Java regexes. Prefix with pid:, app:, tag: or text: to limit scope.</div>
<div class="b" style="left:1255px;top:567px;width:70px;height:23px;border:1px solid #adadad;background:#e1e1e1;"></div>
<div class="t" id="verb" style="left:1259px;top:572px;color:#000;font-size:12.3px;letter-spacing:-0.208px;">verbose</div>
<div class="b" style="left:1376px;top:567px;width:46px;height:21px;border:1px solid #99d1ff;background:#cce4f7;"></div>
<div class="v" style="left:1399px;top:567px;height:21px;background:#99d1ff"></div>
<!-- plus -->
<svg style="left:150px;top:569px" width="12" height="12" viewBox="0 0 12 12"><path d="M4 0H8V4H12V8H8V12H4V8H0V4H4Z" fill="#00d000"/></svg>
<!-- minus -->
<div class="a" style="left:173px;top:573px;width:12px;height:4px;background:#9c9c9c"></div>
<!-- edit -->
<svg style="left:194px;top:567px" width="17" height="17" viewBox="0 0 17 17"><rect x="0.5" y="4.5" width="10" height="11.5" fill="#f6f6f6" stroke="#a8a8a8" stroke-width="1"/><g fill="#b0b0b0"><rect x="2" y="6" width="6" height="1"/><rect x="2" y="8" width="5" height="1"/><rect x="2" y="10" width="5" height="1"/><rect x="2" y="12" width="6" height="1"/><rect x="2" y="14" width="7" height="1"/></g><path d="M13.5 0.5Q17.5 0 16.8 3.5L12 11.5L9.5 13L9.3 10L12 2Q12.5 0.5 13.5 0.5Z" fill="#a0a0a0"/></svg>
<!-- combo chevron -->
<svg style="left:1312px;top:576px" width="10" height="7" viewBox="0 0 10 7"><path d="M0.5 1L4.5 5L8.5 1" fill="none" stroke="#555" stroke-width="1.1"/></svg>
<!-- save -->
<svg style="left:1334px;top:571px" width="14" height="14" viewBox="0 0 14 14"><path d="M0 1Q0 0 1 0H13Q14 0 14 1V14H0Z" fill="#222"/><rect x="1.5" y="0.5" width="11" height="13" fill="#4d555d"/><rect x="4" y="0" width="6" height="6" fill="#fff"/><rect x="5" y="1.5" width="4" height="0.8" fill="#9aa"/><rect x="5" y="3.5" width="4" height="0.8" fill="#9aa"/><rect x="4" y="9" width="6" height="5" fill="#c4c8d0"/><rect x="7.5" y="10" width="1.5" height="3" fill="#333"/></svg>
<!-- clear -->
<svg style="left:1358px;top:570px" width="14" height="17" viewBox="0 0 14 17"><rect x="0.5" y="0.5" width="11" height="14" fill="#fff" stroke="#111" stroke-width="1"/><rect x="1" y="1" width="10" height="1" fill="#999"/><g fill="#111"><rect x="2" y="3" width="3" height="1"/><rect x="6" y="3" width="4" height="1"/><rect x="2" y="5" width="4" height="1"/><rect x="7" y="5" width="3" height="1"/><rect x="2" y="7" width="2" height="1"/><rect x="5" y="7" width="5" height="1"/><rect x="2" y="9" width="5" height="1"/><rect x="2" y="11" width="4" height="1"/></g><path d="M7 9.5L13 15.5M13 9.5L7 15.5" stroke="#f00" stroke-width="2"/></svg>
<!-- toggle icons -->
<svg style="left:1381px;top:572px" width="14" height="12" viewBox="0 0 14 12"><rect x="0.75" y="0.75" width="12.5" height="10.5" rx="1.5" fill="none" stroke="#6b7785" stroke-width="1.5"/><path d="M4 1V11" stroke="#6b7785" stroke-width="1.5"/></svg>
<svg style="left:1405px;top:572px" width="13" height="14" viewBox="0 0 13 14"><path d="M4.5 0H7.5V7H11.5L6 12L0.5 7H4.5Z" fill="#000"/><rect x="1.5" y="11.5" width="9" height="2" fill="#6b6b6b"/></svg>

<div class="a" style="left:229px;top:600px;width:1182px;height:177px;background:#fff"></div>
<div class="v" style="left:257px;top:600px;height:24px;background:#e5e5e5"></div>
<div class="v" style="left:387px;top:600px;height:24px;background:#e5e5e5"></div>
<div class="v" style="left:437px;top:600px;height:24px;background:#e5e5e5"></div>
<div class="v" style="left:487px;top:600px;height:24px;background:#e5e5e5"></div>
<div class="v" style="left:630px;top:600px;height:24px;background:#e5e5e5"></div>
<div class="v" style="left:737px;top:600px;height:24px;background:#e5e5e5"></div>
<div class="v" style="left:1280px;top:600px;height:24px;background:#e5e5e5"></div>
<div class="t" style="left:236px;top:605px;color:#000;font-size:12.3px;letter-spacing:-0.298px;">L...</div>
<div class="t" style="left:265px;top:605px;color:#000;font-size:12.3px;letter-spacing:0.275px;">Time</div>
<div class="t" style="left:394px;top:605px;color:#000;font-size:12.3px;letter-spacing:-1.100px;">PID</div>
<div class="t" style="left:444px;top:605px;color:#000;font-size:12.3px;letter-spacing:-0.756px;">TID</div>
<div class="t" style="left:494px;top:605px;color:#000;font-size:12.3px;letter-spacing:0.113px;">Application</div>
<div class="t" style="left:637px;top:605px;color:#000;font-size:12.3px;letter-spacing:-0.214px;">Tag</div>
<div class="t" style="left:744px;top:605px;color:#000;font-size:12.3px;letter-spacing:-0.354px;">Text</div>
<div class="m" style="left:744px;top:628px;color:#00007f;">leted=true,&nbsp;mScreenBrightnessBoostInProgress=false</div>
<div class="m" style="left:235px;top:647px;color:#00007f;">D</div>
<div class="m" style="left:264px;top:647px;color:#00007f;">03-23 08:59:5...</div>
<div class="m" style="left:394px;top:647px;color:#00007f;">807</div>
<div class="m" style="left:444px;top:647px;color:#00007f;">807</div>
<div class="m" style="left:637px;top:647px;color:#00007f;">PowerManag...</div>
<div class="m" style="left:744px;top:647px;color:#00007f;">Releasing&nbsp;suspend&nbsp;blocker&nbsp;&quot;PowerManagerService.WakeLocks&quot;.</div>
<div class="m" style="left:235px;top:666px;color:#ff0000;">E</div>
<div class="m" style="left:264px;top:666px;color:#ff0000;">03-23 08:59:5...</div>
<div class="m" style="left:394px;top:666px;color:#ff0000;">807</div>
<div class="m" style="left:444px;top:666px;color:#ff0000;">807</div>
<div class="m" style="left:637px;top:666px;color:#ff0000;">WifiTraffi...</div>
<div class="m" style="left:744px;top:666px;color:#ff0000;">TRAFFIC_STATS_POLL&nbsp;true&nbsp;Token&nbsp;219&nbsp;num&nbsp;clients&nbsp;8</div>
<div class="m" style="left:235px;top:685px;color:#ff0000;">E</div>
<div class="m" style="left:264px;top:685px;color:#ff0000;">03-23 08:59:5...</div>
<div class="m" style="left:394px;top:685px;color:#ff0000;">807</div>
<div class="m" style="left:444px;top:685px;color:#ff0000;">807</div>
<div class="m" style="left:637px;top:685px;color:#ff0000;">WifiTraffi...</div>
<div class="m" style="left:744px;top:685px;color:#ff0000;">&nbsp;packet&nbsp;count&nbsp;Tx=280513&nbsp;Rx=414802</div>
<div class="m" style="left:235px;top:704px;color:#007f00;">I</div>
<div class="m" style="left:264px;top:704px;color:#007f00;">03-23 08:59:5...</div>
<div class="m" style="left:394px;top:704px;color:#007f00;">1703</div>
<div class="m" style="left:444px;top:704px;color:#007f00;">1709</div>
<div class="m" style="left:637px;top:704px;color:#007f00;">PerfService</div>
<div class="m" style="left:744px;top:704px;color:#007f00;">PerfServiceNative_getPackName</div>
<div class="m" style="left:235px;top:723px;color:#007f00;">I</div>
<div class="m" style="left:264px;top:723px;color:#007f00;">03-23 08:59:5...</div>
<div class="m" style="left:394px;top:723px;color:#007f00;">807</div>
<div class="m" style="left:444px;top:723px;color:#007f00;">3368</div>
<div class="m" style="left:637px;top:723px;color:#007f00;">libPerfSer...</div>
<div class="m" style="left:744px;top:723px;color:#007f00;">perfGetLastBoostPid&nbsp;7883</div>
<div class="m" style="left:235px;top:742px;color:#00007f;">D</div>
<div class="m" style="left:264px;top:742px;color:#00007f;">03-23 08:59:5...</div>
<div class="m" style="left:394px;top:742px;color:#00007f;">807</div>
<div class="m" style="left:444px;top:742px;color:#00007f;">3368</div>
<div class="m" style="left:637px;top:742px;color:#00007f;">PerfServic...</div>
<div class="m" style="left:744px;top:742px;color:#00007f;">[PerfService]&nbsp;getLastBoostPid&nbsp;7883</div>
<div class="m" style="left:235px;top:761px;color:#007f00;">I</div>
<div class="m" style="left:264px;top:761px;color:#007f00;">03-23 08:59:5...</div>
<div class="m" style="left:394px;top:761px;color:#007f00;">807</div>
<div class="m" style="left:444px;top:761px;color:#007f00;">3368</div>
<div class="m" style="left:637px;top:761px;color:#007f00;">libPerfSer...</div>
<div class="m" style="left:744px;top:761px;color:#007f00;">perfGetLastBoostPid&nbsp;7883</div>
<div class="a" style="left:1411px;top:600px;width:18px;height:177px;background:#f0f0f0"></div>
<svg style="left:1414px;top:605px" width="10" height="9" viewBox="0 0 10 9"><path d="M1.6 6.6L4.5 3.2L7.4 6.6" fill="none" stroke="#555" stroke-width="2.1"/></svg>
<div class="a" style="left:1411px;top:743px;width:15px;height:17px;background:#cdcdcd"></div>
<svg style="left:1414px;top:765px" width="10" height="9" viewBox="0 0 10 9"><path d="M1.6 1.6L4.5 5L7.4 1.6" fill="none" stroke="#555" stroke-width="2.1"/></svg>
</body></html>
